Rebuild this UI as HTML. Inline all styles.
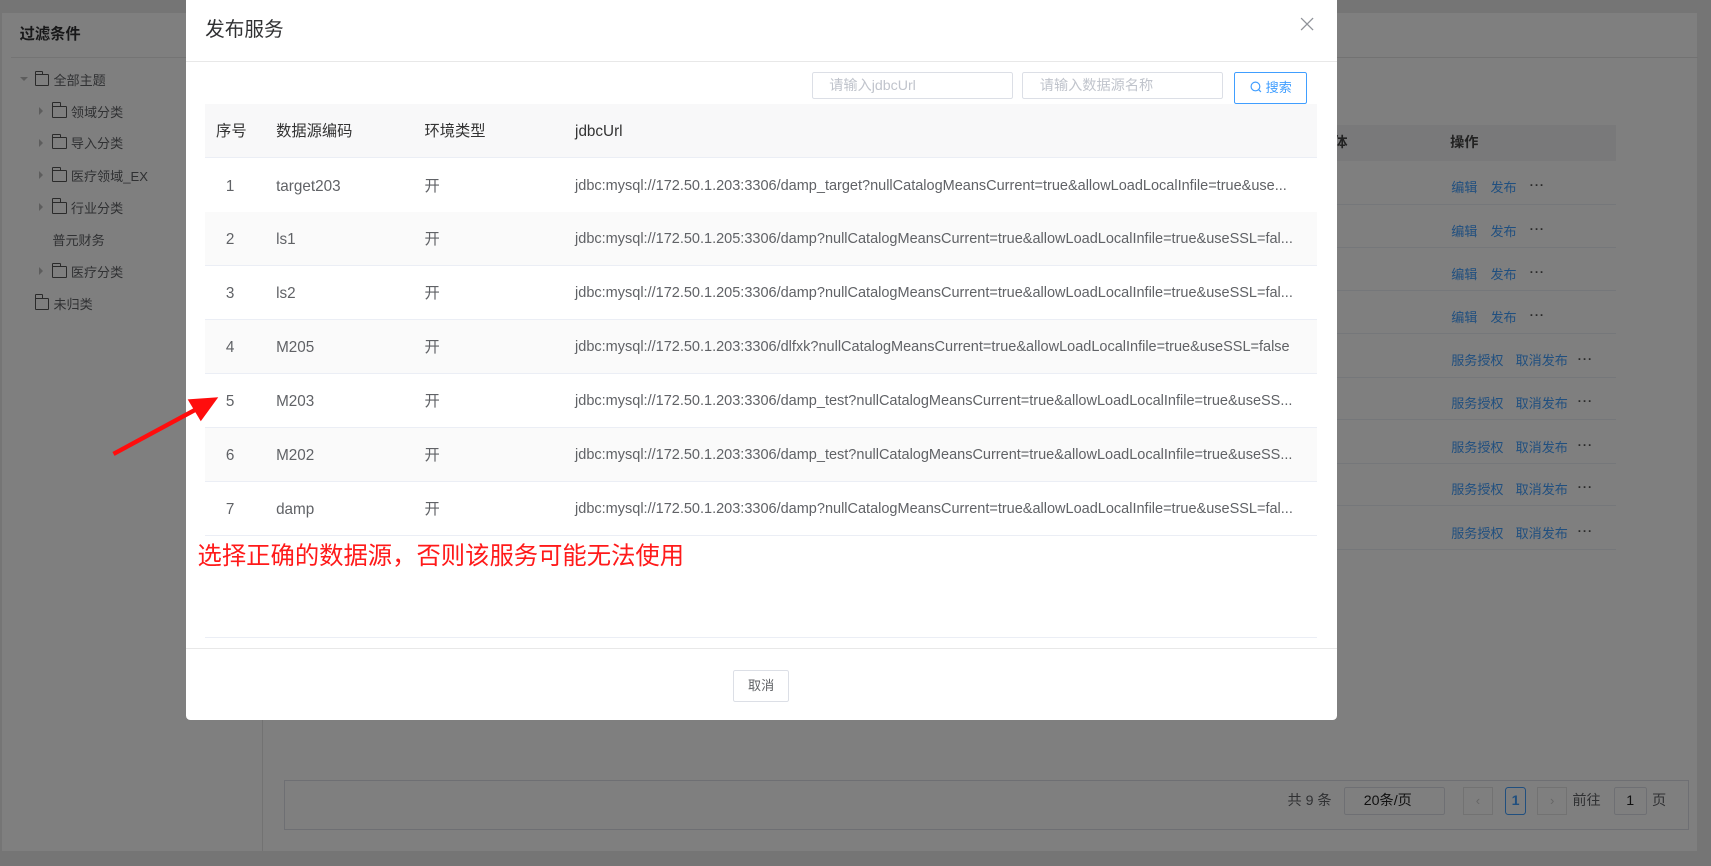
<!DOCTYPE html>
<html><head><meta charset="utf-8"><style>
*{box-sizing:border-box;margin:0;padding:0}
html,body{width:1711px;height:866px;overflow:hidden}
body{font-family:"Liberation Sans","Noto Sans CJK SC",sans-serif;background:#eaeaea}
#w{zoom:1.0912;width:1568px;height:794px;position:relative;overflow:hidden;background:#eaeaea}
.abs{position:absolute}
.side{left:2px;top:12px;width:238px;height:768px;background:#fff}
.main{left:240px;top:12px;width:1315px;height:768px;background:#fff;border-left:1px solid #e4e4e4}
.ti{position:absolute;font-size:12px;line-height:16px;color:#606266;white-space:nowrap}
.fold{display:inline-block;width:13px;height:11px;border:1px solid #555;border-radius:1px;vertical-align:-1px;margin-right:4px;position:relative}
.fold:before{content:"";position:absolute;left:-1px;top:-4px;width:6px;height:3px;border:1px solid #555;border-bottom:none;border-radius:1px 1px 0 0}
.tri{position:absolute;width:0;height:0;border-top:4px solid transparent;border-bottom:4px solid transparent;border-left:4px solid #bbb}
.row{position:absolute;left:20px;width:1220px;height:40px;border-bottom:1px solid #ebeef5}
.lk{position:absolute;font-size:12px;line-height:16px;color:#409eff}
.dots{position:absolute;font-size:11px;line-height:10px;color:#555;letter-spacing:1px;font-weight:bold}
.ov{position:absolute;left:0;top:0;width:1568px;height:794px;background:rgba(0,0,0,0.5)}
.modal{position:absolute;left:170px;top:0;width:1055px;height:660px;background:#fff;border-radius:0 0 4px 4px}
.tr{position:absolute;left:18px;width:1019px;height:50px;border-bottom:1px solid #ebeef5;font-size:14px;color:#606266}
.tr span{position:absolute;top:17px;line-height:18px;height:18px;white-space:nowrap;display:block}
.tr span.u{font-size:13.3px}
.inp{position:absolute;top:66px;height:25px;border:1px solid #dcdfe6;border-radius:2px;font-size:13px;line-height:16px;color:#c0c4cc;padding:5px 0 0 15px}
.pg{position:absolute;top:715px;font-size:13px;line-height:16px;color:#606266}
</style></head><body><div id="w">
<div class="abs side">
 <div class="abs" style="left:16px;top:11px;font-size:14px;line-height:18px;font-weight:bold;color:#303133">过滤条件</div>
 <div class="abs" style="left:8px;top:40px;width:230px;border-top:1px solid #e8e8e8"></div>
 <div class="abs" style="left:16px;top:59px;width:0;height:0;border-left:4px solid transparent;border-right:4px solid transparent;border-top:4px solid #bbb"></div>
 <div class="ti" style="left:30px;top:54px"><i class="fold"></i>全部主题</div>
 <div class="tri" style="left:34px;top:86px"></div><div class="ti" style="left:46px;top:83px"><i class="fold"></i>领域分类</div>
 <div class="tri" style="left:34px;top:115px"></div><div class="ti" style="left:46px;top:112px"><i class="fold"></i>导入分类</div>
 <div class="tri" style="left:34px;top:145px"></div><div class="ti" style="left:46px;top:142px"><i class="fold"></i>医疗领域_EX</div>
 <div class="tri" style="left:34px;top:174px"></div><div class="ti" style="left:46px;top:171px"><i class="fold"></i>行业分类</div>
 <div class="ti" style="left:46px;top:201px">普元财务</div>
 <div class="tri" style="left:34px;top:233px"></div><div class="ti" style="left:46px;top:230px"><i class="fold"></i>医疗分类</div>
 <div class="ti" style="left:30px;top:259px"><i class="fold"></i>未归类</div>
</div>
<div class="abs main">
 <div class="abs" style="left:0;top:40px;width:1315px;border-top:1px solid #e4e4e4"></div>
 <div class="abs" style="left:20px;top:103px;width:1220px;height:33px;background:#f2f3f5"></div>
 <div class="abs" style="left:981px;top:112px;font-size:13px;line-height:16px;font-weight:bold;color:#444">体</div>
 <div class="abs" style="left:1088px;top:112px;font-size:13px;line-height:16px;font-weight:bold;color:#444">操作</div>
 <div class="row" style="top:136px"></div><div class="row" style="top:175px"></div><div class="row" style="top:215px"></div><div class="row" style="top:254px"></div><div class="row" style="top:294px"></div><div class="row" style="top:333px"></div><div class="row" style="top:373px"></div><div class="row" style="top:412px"></div><div class="row" style="top:452px"></div>
 <div class="lk" style="left:1089px;top:152px">编辑</div><div class="lk" style="left:1125px;top:152px">发布</div><div class="dots" style="left:1161px;top:153px">···</div>
 <div class="lk" style="left:1089px;top:192px">编辑</div><div class="lk" style="left:1125px;top:192px">发布</div><div class="dots" style="left:1161px;top:193px">···</div>
 <div class="lk" style="left:1089px;top:232px">编辑</div><div class="lk" style="left:1125px;top:232px">发布</div><div class="dots" style="left:1161px;top:233px">···</div>
 <div class="lk" style="left:1089px;top:271px">编辑</div><div class="lk" style="left:1125px;top:271px">发布</div><div class="dots" style="left:1161px;top:272px">···</div>
 <div class="lk" style="left:1089px;top:311px">服务授权</div><div class="lk" style="left:1148px;top:311px">取消发布</div><div class="dots" style="left:1205px;top:312px">···</div>
 <div class="lk" style="left:1089px;top:350px">服务授权</div><div class="lk" style="left:1148px;top:350px">取消发布</div><div class="dots" style="left:1205px;top:351px">···</div>
 <div class="lk" style="left:1089px;top:390px">服务授权</div><div class="lk" style="left:1148px;top:390px">取消发布</div><div class="dots" style="left:1205px;top:391px">···</div>
 <div class="lk" style="left:1089px;top:429px">服务授权</div><div class="lk" style="left:1148px;top:429px">取消发布</div><div class="dots" style="left:1205px;top:430px">···</div>
 <div class="lk" style="left:1089px;top:469px">服务授权</div><div class="lk" style="left:1148px;top:469px">取消发布</div><div class="dots" style="left:1205px;top:470px">···</div>
 <div class="abs" style="left:19px;top:703px;width:1288px;height:46px;border:1px solid #dcdfe6"></div>
 <div class="pg" style="left:939px">共 9 条</div>
 <div class="abs" style="left:991px;top:709px;width:92px;height:26px;border:1px solid #dcdfe6;border-radius:2px;font-size:13px;line-height:16px;color:#222;padding:5px 0 0 17px">20条/页</div>
 <div class="abs" style="left:1100px;top:709px;width:27px;height:26px;border:1px solid #e4e4e4;color:#ccc;font-size:12px;text-align:center;line-height:24px">‹</div>
 <div class="abs" style="left:1138px;top:709px;width:20px;height:26px;border:1px solid #409eff;border-radius:3px;color:#409eff;font-size:13px;font-weight:bold;text-align:center;line-height:25px">1</div>
 <div class="abs" style="left:1168px;top:709px;width:27px;height:26px;border:1px solid #e4e4e4;color:#ccc;font-size:12px;text-align:center;line-height:24px">›</div>
 <div class="pg" style="left:1200px">前往</div>
 <div class="abs" style="left:1238px;top:709px;width:30px;height:26px;border:1px solid #dcdfe6;border-radius:2px;font-size:13px;color:#222;text-align:center;line-height:25px">1</div>
 <div class="pg" style="left:1273px">页</div>
</div>
<div class="ov"></div>
<div class="modal">
 <div class="abs" style="left:18px;top:16px;font-size:18px;line-height:24px;color:#303133">发布服务</div>
 <svg class="abs" style="left:1021px;top:16px" width="13" height="13" viewBox="0 0 13 13"><path d="M1 1L12 12M12 1L1 12" stroke="#909399" stroke-width="1.2"/></svg>
 <div class="abs" style="left:0;top:56px;width:1055px;border-top:1px solid #e8e8e8"></div>
 <div class="inp" style="left:574px;width:184px">请输入jdbcUrl</div>
 <div class="inp" style="left:767px;width:184px">请输入数据源名称</div>
 <div class="abs" style="left:961px;top:66px;width:67px;height:29px;border:1px solid #409eff;border-radius:2px;color:#409eff;font-size:12px;line-height:15px;padding:6px 0 0 14px"><svg width="11" height="11" viewBox="0 0 11 11" style="vertical-align:-1px;margin-right:3px"><circle cx="5" cy="5" r="4" fill="none" stroke="#409eff" stroke-width="1.1"/><path d="M8 8L10 10" stroke="#409eff" stroke-width="1.1"/></svg>搜索</div>
 <div class="tr" style="top:95px;background:#f8f8f9;color:#333"><span style="left:10px">序号</span><span style="left:65px">数据源编码</span><span style="left:201px">环境类型</span><span style="left:339px">jdbcUrl</span></div>
 <div class="tr" style="top:145px"><span style="left:19px">1</span><span style="left:65px">target203</span><span style="left:201px">开</span><span class="u" style="left:339px">jdbc:mysql://172.50.1.203:3306/damp_target?nullCatalogMeansCurrent=true&amp;allowLoadLocalInfile=true&amp;use...</span></div>
 <div class="tr" style="top:194px;background:#fafafa"><span style="left:19px">2</span><span style="left:65px">ls1</span><span style="left:201px">开</span><span class="u" style="left:339px">jdbc:mysql://172.50.1.205:3306/damp?nullCatalogMeansCurrent=true&amp;allowLoadLocalInfile=true&amp;useSSL=fal...</span></div>
 <div class="tr" style="top:243px"><span style="left:19px">3</span><span style="left:65px">ls2</span><span style="left:201px">开</span><span class="u" style="left:339px">jdbc:mysql://172.50.1.205:3306/damp?nullCatalogMeansCurrent=true&amp;allowLoadLocalInfile=true&amp;useSSL=fal...</span></div>
 <div class="tr" style="top:293px;background:#fafafa"><span style="left:19px">4</span><span style="left:65px">M205</span><span style="left:201px">开</span><span class="u" style="left:339px">jdbc:mysql://172.50.1.203:3306/dlfxk?nullCatalogMeansCurrent=true&amp;allowLoadLocalInfile=true&amp;useSSL=false</span></div>
 <div class="tr" style="top:342px"><span style="left:19px">5</span><span style="left:65px">M203</span><span style="left:201px">开</span><span class="u" style="left:339px">jdbc:mysql://172.50.1.203:3306/damp_test?nullCatalogMeansCurrent=true&amp;allowLoadLocalInfile=true&amp;useSS...</span></div>
 <div class="tr" style="top:392px;background:#fafafa"><span style="left:19px">6</span><span style="left:65px">M202</span><span style="left:201px">开</span><span class="u" style="left:339px">jdbc:mysql://172.50.1.203:3306/damp_test?nullCatalogMeansCurrent=true&amp;allowLoadLocalInfile=true&amp;useSS...</span></div>
 <div class="tr" style="top:441px"><span style="left:19px">7</span><span style="left:65px">damp</span><span style="left:201px">开</span><span class="u" style="left:339px">jdbc:mysql://172.50.1.203:3306/damp?nullCatalogMeansCurrent=true&amp;allowLoadLocalInfile=true&amp;useSSL=fal...</span></div>
 <div class="abs" style="left:11px;top:497px;font-size:22.3px;line-height:28px;color:#ff1a1a;white-space:nowrap">选择正确的数据源，否则该服务可能无法使用</div>
 <div class="abs" style="left:18px;top:584px;width:1019px;border-top:1px solid #ebeef5"></div>
 <div class="abs" style="left:0;top:594px;width:1055px;border-top:1px solid #e8e8e8"></div>
 <div class="abs" style="left:502px;top:614px;width:51px;height:29px;border:1px solid #dcdfe6;border-radius:2px;font-size:12px;color:#606266;text-align:center;line-height:27px">取消</div>
</div>
<svg class="abs" style="left:0;top:0" width="300" height="500"><path d="M104 416L180 375" stroke="#ff0d0d" stroke-width="4"/><path d="M200 364L172 366L184 386Z" fill="#ff0d0d"/></svg>
</div></body></html>
